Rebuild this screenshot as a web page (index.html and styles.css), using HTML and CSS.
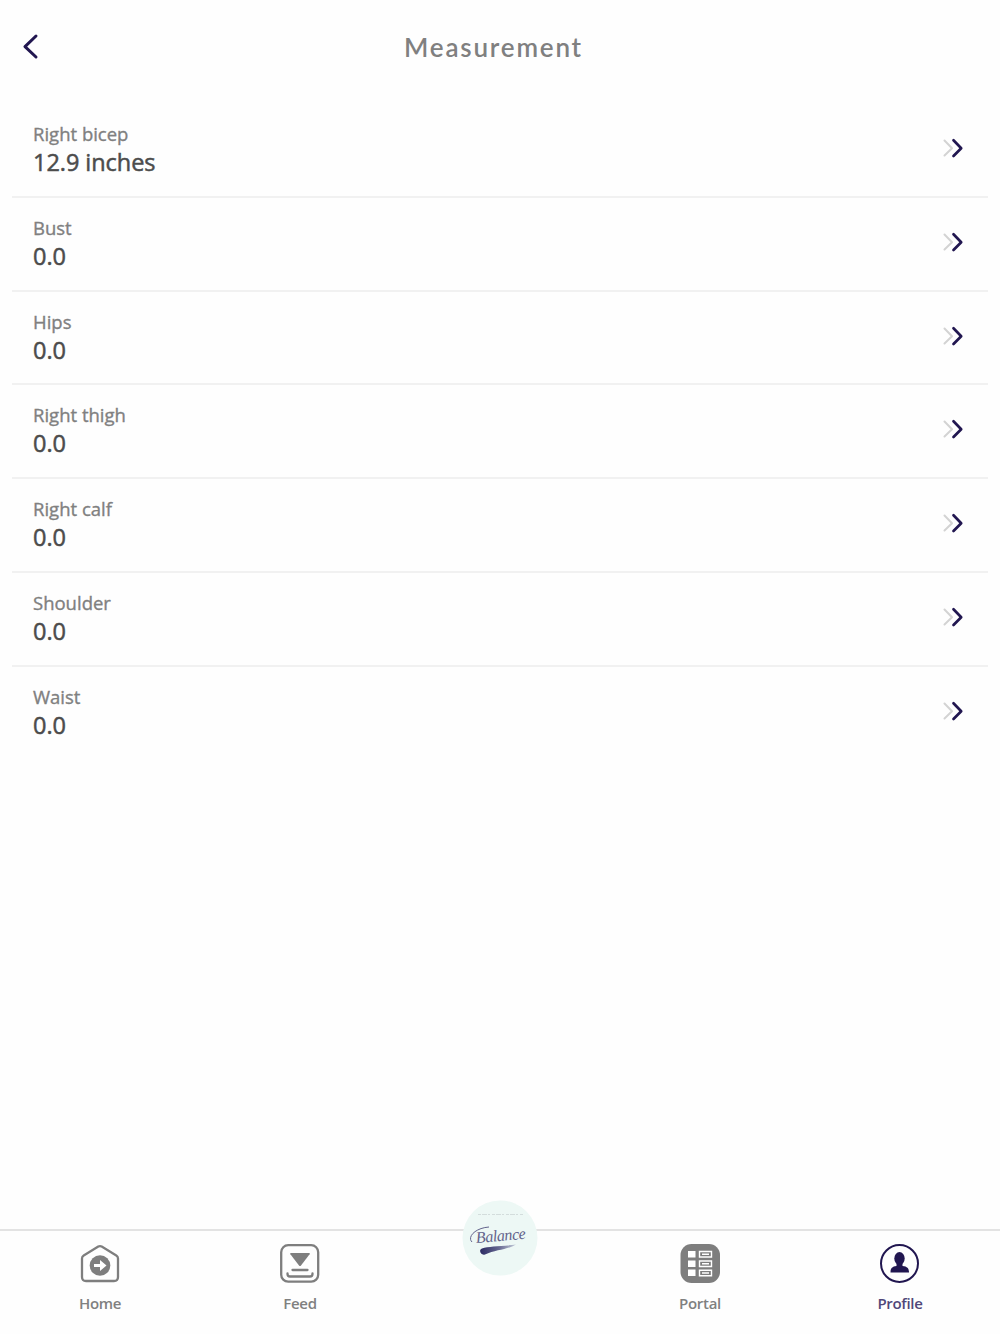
FILE: index.html
```html
<!DOCTYPE html>
<html lang="en">
<head>
    <meta charset="UTF-8">
    <title>Measurement</title>
    <link rel="stylesheet" href="styles.css">
</head>
<body>
<svg class="Sprite">
    <symbol id="chevrons" viewBox="0 0 22 20">
        <path d="M2.5 2.5l7.5 7.7-7.5 7.3" stroke="#d3d3d3" stroke-width="2"/>
        <path d="M11.5 2.3l7.7 7.9-7.7 7.8" stroke="#211650" stroke-width="2.7"/>
    </symbol>
</svg>
<header class="Header">
    <svg class="Header-back" width="20" height="28" viewBox="0 0 20 28">
        <path d="M16 4L5 14.6 16 25"/>
    </svg>
    <h1 class="Header-title">Measurement</h1>
</header>
<main class="List">
    <div class="List-item">
        <div>
            <div class="List-label">Right bicep</div>
            <div class="List-value">12.9 inches</div>
        </div>
        <svg class="List-arrow"><use href="#chevrons"/></svg>
    </div>
    <div class="List-item">
        <div>
            <div class="List-label">Bust</div>
            <div class="List-value">0.0</div>
        </div>
        <svg class="List-arrow"><use href="#chevrons"/></svg>
    </div>
    <div class="List-item">
        <div>
            <div class="List-label">Hips</div>
            <div class="List-value">0.0</div>
        </div>
        <svg class="List-arrow"><use href="#chevrons"/></svg>
    </div>
    <div class="List-item">
        <div>
            <div class="List-label">Right thigh</div>
            <div class="List-value">0.0</div>
        </div>
        <svg class="List-arrow"><use href="#chevrons"/></svg>
    </div>
    <div class="List-item">
        <div>
            <div class="List-label">Right calf</div>
            <div class="List-value">0.0</div>
        </div>
        <svg class="List-arrow"><use href="#chevrons"/></svg>
    </div>
    <div class="List-item">
        <div>
            <div class="List-label">Shoulder</div>
            <div class="List-value">0.0</div>
        </div>
        <svg class="List-arrow"><use href="#chevrons"/></svg>
    </div>
    <div class="List-item">
        <div>
            <div class="List-label">Waist</div>
            <div class="List-value">0.0</div>
        </div>
        <svg class="List-arrow"><use href="#chevrons"/></svg>
    </div>
</main>
<nav class="Tabs">
    <div class="Tab">
        <svg class="Tab-icon" viewBox="0 0 42 42">
            <path class="line" d="M3 15.5q0-2 1.7-3L19.3 3.6q1.7-1 3.4 0l14.6 8.9q1.7 1 1.7 3V34q0 4-4 4H7q-4 0-4-4z"/>
            <circle cx="21" cy="22.5" r="10.3" fill="#7e7e7e"/>
            <path d="M15 21h6v-4l6.5 5.5L21 28v-4h-6z" fill="#fff"/>
        </svg>
        <span>Home</span>
    </div>
    <div class="Tab">
        <svg class="Tab-icon" viewBox="0 0 42 42">
            <rect class="line" x="2.2" y="2.2" width="37" height="36.5" rx="7"/>
            <path d="M12 10h18q1.5 0 .6 1.3L22 22.5q-1 1.2-2 0l-8.6-11.2Q10.5 10 12 10z" fill="#7e7e7e"/>
            <path class="line" d="M13.5 27h15M8.500 30.500v.5q0 2.500 2.500 2.500h20q2.500 0 2.500-2.500v-.5"/>
        </svg>
        <span>Feed</span>
    </div>
    <div class="Tab">
        <svg class="Logo" width="76" height="76" viewBox="0 0 76 76">
            <defs>
                <linearGradient id="brush">
                    <stop offset="0" stop-color="#2c2c63"/>
                    <stop offset=".5" stop-color="#62648e"/>
                    <stop offset="1" stop-color="#c4cdda"/>
                </linearGradient>
            </defs>
            <circle cx="38" cy="38" r="37.5" fill="#edf8f5"/>
            <path d="M16 14.5h46" stroke="#d3dddc" stroke-width="1.2" stroke-dasharray="3 1 5 1 2 2"/>
            <text class="Logo-name" x="14" y="41" transform="rotate(-5 38 38)" textLength="50">Balance</text>
            <path d="M10 42c-5-5 3-14 17-15" fill="none" stroke="#62638b"/>
            <path d="M20 48.5c7-2.500 18-2 34-4-8 5-20 5-31 10-4 1.500-7-4.500-3-6z" fill="url(#brush)"/>
        </svg>
    </div>
    <div class="Tab">
        <svg class="Tab-icon" viewBox="0 0 42 42">
            <rect x="1.500" y="1" width="39.500" height="39" rx="11" fill="#7e7e7e"/>
            <path d="M9 8h7.500v6.500H9zM9 17.500h7.500V24H9zM9 26.500h7.500V33H9z" fill="#fff"/>
            <path d="M20.500 8.500h12v5.500h-12zM20.500 18h12v5.500h-12zM20.500 27.200h12v5.500h-12zM23 11.200h7M23 20.700h7M23 30h7" fill="none" stroke="#fff" stroke-width="1.400"/>
        </svg>
        <span>Portal</span>
    </div>
    <div class="Tab is-active">
        <svg class="Tab-icon" viewBox="0 0 42 42">
            <circle cx="20.500" cy="20.500" r="18.500" fill="none" stroke="#211650" stroke-width="2"/>
            <ellipse cx="20.500" cy="15.500" rx="5.200" ry="6.500" fill="#211650"/>
            <path d="M17.500 20h6v3c5 .5 6.500 2.500 6.500 6.500H11.500c0-4 1.500-6 6-6.500z" fill="#211650"/>
        </svg>
        <span>Profile</span>
    </div>
</nav>
</body>
</html>
```
FILE: styles.css
```css
* {
    box-sizing: border-box;
}
body {
    margin: 0;
    height: 100vh;
    display: flex;
    flex-direction: column;
    background: #fefefe;
    font-family: "Open Sans", "Noto Sans", sans-serif;
    color: #808080;
}
.Sprite {
    display: none;
}
.Header {
    height: 104px;
    padding: 32px 20px 0;
    display: grid;
    grid-template-columns: 20px 1fr 33px;
    align-items: start;
}
.Header-back path {
    fill: none;
    stroke: #211650;
    stroke-width: 3;
    stroke-linecap: round;
    stroke-linejoin: round;
}
.Header-title {
    margin: 0;
    font-family: Lato, sans-serif;
    font-size: 26px;
    line-height: 30px;
    font-weight: 600;
    letter-spacing: 1.8px;
    text-align: center;
}
.List {
    flex: 1;
    padding: 0 12px;
}
.List-item {
    height: 93.75px;
    padding: 17px 24px 0 21px;
    display: flex;
    justify-content: space-between;
    align-items: flex-start;
    border-bottom: 2px solid #f1f1f1;
}
.List-item:last-child {
    border-bottom: 0;
}
.List-label {
    font-size: 18.5px;
    line-height: 26px;
    -webkit-text-stroke: 0.35px;
}
.List-value {
    font-size: 23.5px;
    line-height: 30px;
    -webkit-text-stroke: 0.5px;
    letter-spacing: -0.05px;
    color: #4c4c4c;
}
.List-arrow {
    width: 22px;
    height: 20px;
    margin-top: 17px;
    fill: none;
    stroke-linecap: round;
    stroke-linejoin: round;
}
.Tabs {
    height: 105px;
    display: flex;
    border-top: 2px solid #e3e3e3;
}
.Tab {
    flex: 1;
    padding-top: 12px;
    display: flex;
    flex-direction: column;
    align-items: center;
    font-size: 15px;
    line-height: 20px;
    font-weight: 600;
    letter-spacing: -0.3px;
}
.Tab-icon {
    width: 42px;
    height: 42px;
    margin-bottom: 8px;
}
.Tab-icon .line {
    fill: none;
    stroke: #7e7e7e;
    stroke-width: 2.3;
    stroke-linecap: round;
}
.Tab.is-active {
    color: #504779;
}
/* the logo sticks out above the tab bar */
.Logo {
    flex: none;
    margin-top: -43px;
}
.Logo-name {
    font-family: "Liberation Serif", serif;
    font-size: 16px;
    font-style: italic;
    font-weight: 400;
    letter-spacing: 0;
    fill: #62638b;
}
```
